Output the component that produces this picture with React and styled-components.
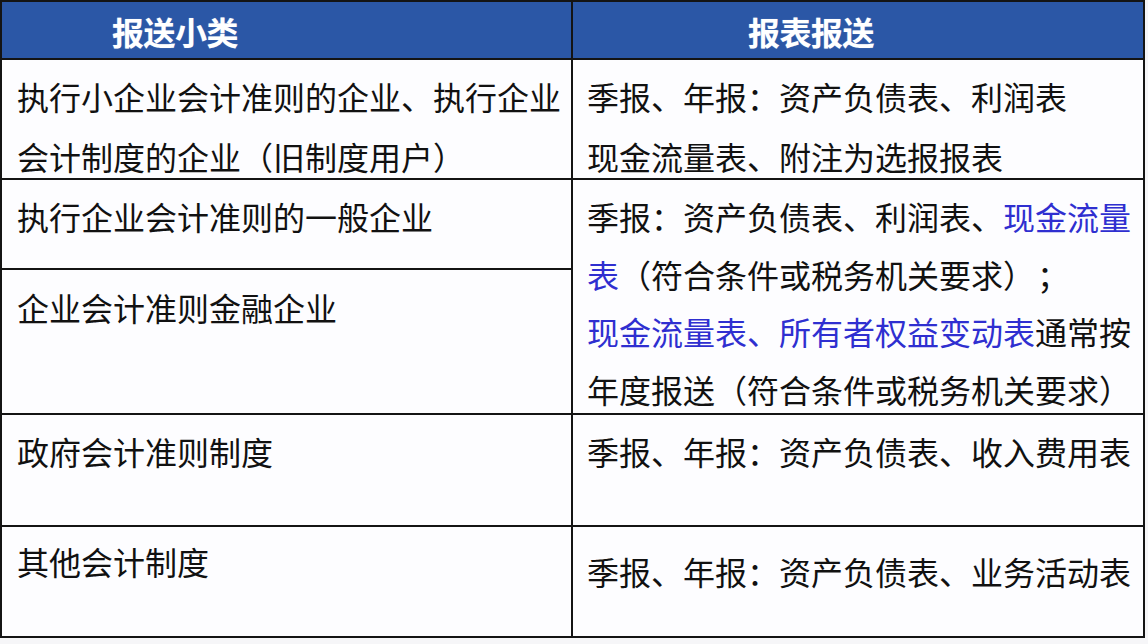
import React from 'react';
import styled, { createGlobalStyle } from 'styled-components';

const GlobalStyle = createGlobalStyle`
  html, body {
    margin: 0;
    padding: 0;
    background: #f6f6f8;
  }
  body {
    font-family: 'Noto Sans CJK SC', 'Noto Sans', sans-serif;
  }
`;

const LINE = '#141414';

const Table = styled.div`
  display: grid;
  grid-template-columns: 569px 570px;
  grid-template-rows: 56px 118px 88px 143px 110px 109px;
  gap: 2px;
  padding: 2px;
  width: 1145px;
  box-sizing: border-box;
  background: ${LINE};
`;

const HeadCell = styled.div`
  display: flex;
  align-items: center;
  padding: 2px 0 0 ${(p) => p.$indent}px;
  background: #2b57a6;
  color: #ffffff;
  font-size: 32px;
  font-weight: 700;
  letter-spacing: -0.5px;
  text-shadow: 0 0 1px rgba(255, 255, 255, 0.4);
`;

const Cell = styled.div`
  grid-row: ${(p) => p.$row || 'auto'};
  background: #fdfdff;
  color: #111111;
  font-size: 32px;
  line-height: ${(p) => p.$lh || 60}px;
  padding: ${(p) => p.$pt || 6}px 0 0 ${(p) => p.$pl}px;
  box-sizing: border-box;
  white-space: nowrap;
`;

const Line = styled.div`
  display: block;
`;

const Blue = styled.span`
  color: #2f2fd0;
`;

const Gap = styled.span`
  display: inline-block;
  width: ${(p) => p.$w}px;
`;

const LEFT = 15;
const RIGHT = 14;

export default function App() {
  return (
    <>
      <GlobalStyle />
      <Table>
        <HeadCell $indent={110}>报送小类</HeadCell>
        <HeadCell $indent={175}>报表报送</HeadCell>

        <Cell $pl={LEFT}>
          <Line>执行小企业会计准则的企业、执行企业</Line>
          <Line>会计制度的企业（旧制度用户）</Line>
        </Cell>
        <Cell $pl={RIGHT}>
          <Line>季报、年报：资产负债表、利润表</Line>
          <Line>现金流量表、附注为选报报表</Line>
        </Cell>

        <Cell $pl={LEFT}>执行企业会计准则的一般企业</Cell>
        <Cell $pl={RIGHT} $row="span 2" $lh={57.7} $pt={8}>
          <Line>
            季报：资产负债表、利润表、<Blue>现金流量</Blue>
          </Line>
          <Line>
            <Blue>表</Blue>（符合条件或税务机关要求）<Gap $w={2} />；
          </Line>
          <Line>
            <Blue>现金流量表、所有者权益变动表</Blue>通常按
          </Line>
          <Line>年度报送（符合条件或税务机关要求）</Line>
        </Cell>
        <Cell $pl={LEFT} $pt={7}>企业会计准则金融企业</Cell>

        <Cell $pl={LEFT}>政府会计准则制度</Cell>
        <Cell $pl={RIGHT}>季报、年报：资产负债表、收入费用表</Cell>

        <Cell $pl={LEFT} $pt={4}>其他会计制度</Cell>
        <Cell $pl={RIGHT} $pt={14}>季报、年报：资产负债表、业务活动表</Cell>
      </Table>
    </>
  );
}
